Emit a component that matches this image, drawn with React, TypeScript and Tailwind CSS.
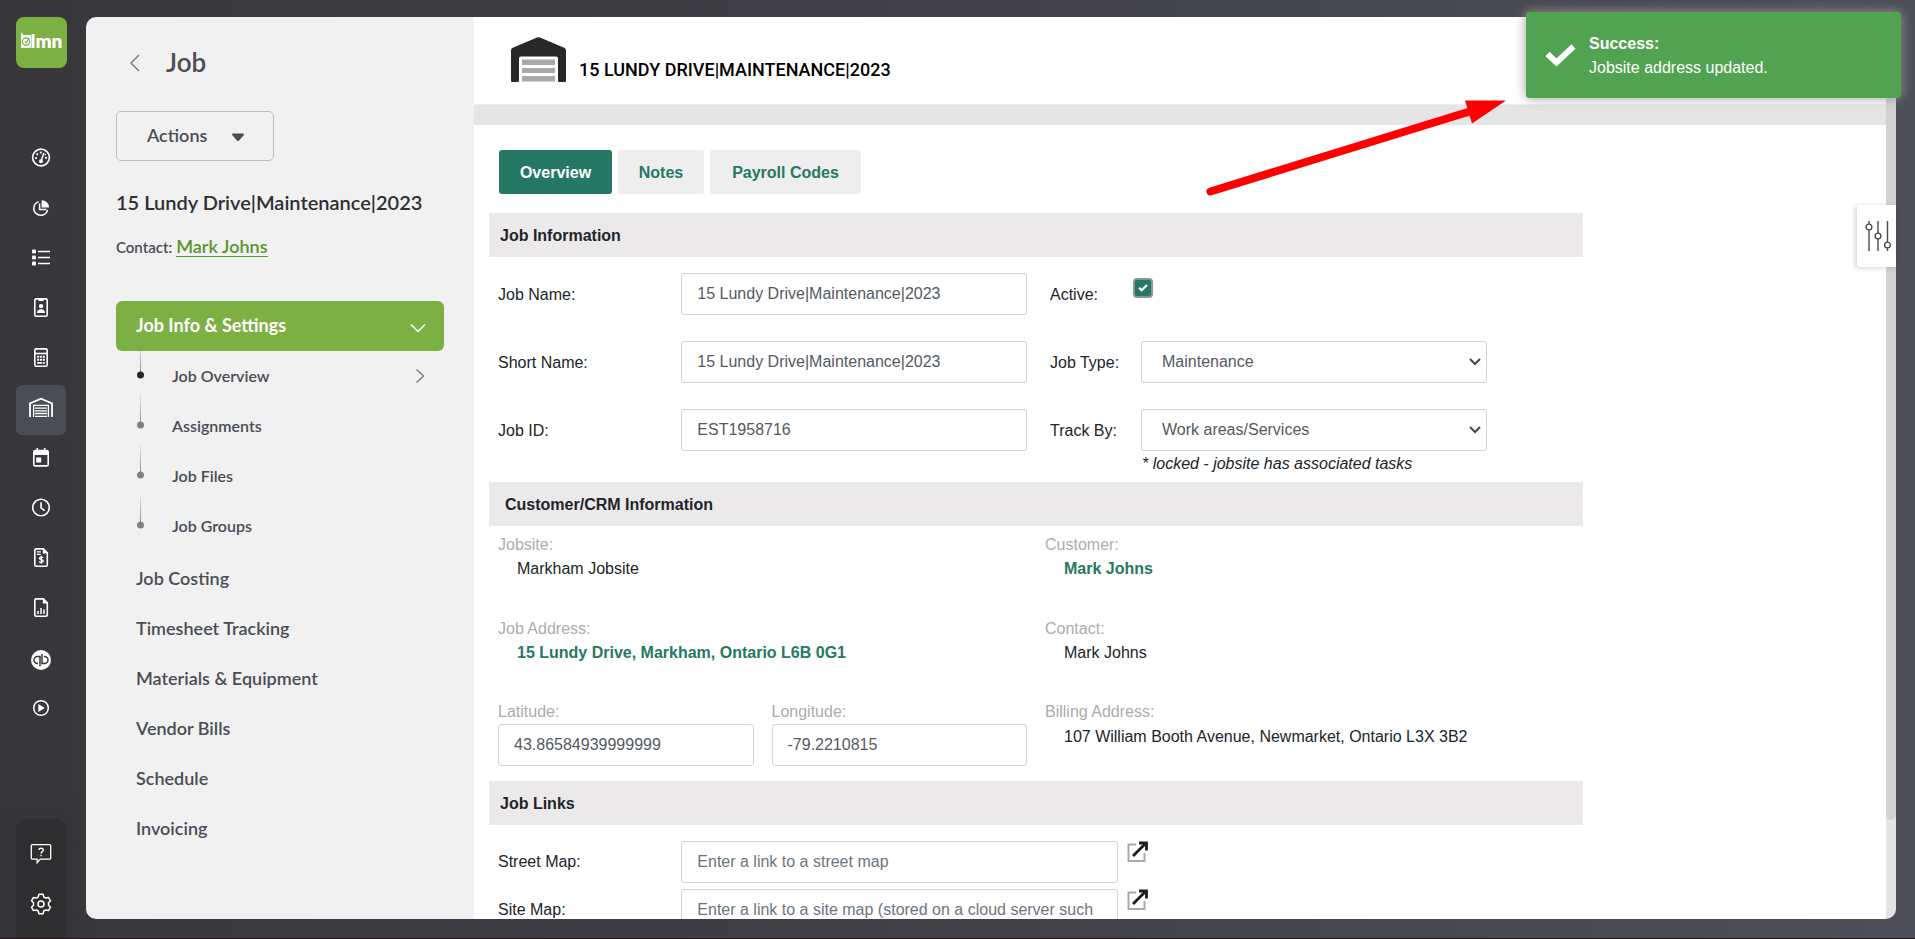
import React from "react";

type IconProps = { children: React.ReactNode; w?: number; h?: number };

function Glyph({ children, w = 24, h = 24 }: IconProps) {
  return (
    <svg width={w} height={h} viewBox={`0 0 ${w} ${h}`} fill="none" stroke="currentColor" strokeWidth={1.6} aria-hidden="true">
      {children}
    </svg>
  );
}

const railItems: { name: string; icon: React.ReactNode; active?: boolean }[] = [
  {
    name: "Dashboard",
    icon: (
      <Glyph>
        <circle cx="12" cy="11.500" r="8.400" />
        <path d="M12.200 15 14.800 7" strokeWidth="1.500" />
        <circle cx="12" cy="15.200" r="2" fill="currentColor" stroke="none" />
        <g fill="currentColor" stroke="none">
          <circle cx="7" cy="12" r="1.100" />
          <circle cx="8.300" cy="8.300" r="1.100" />
          <circle cx="11.800" cy="6.600" r="1.100" />
          <circle cx="17" cy="11.800" r="1.100" />
          <circle cx="16.300" cy="8.600" r=".8" />
        </g>
      </Glyph>
    ),
  },
  {
    name: "Reports",
    icon: (
      <Glyph>
        <path d="M9.600 5.600a7 7 0 1 0 9 8.200" strokeWidth="1.500" />
        <path d="M10.600 7.500v5.900h6.800" strokeWidth="1.500" />
        <path d="M12.600 4.200v7.400H20a7.400 7.400 0 0 0-7.400-7.400z" fill="currentColor" stroke="none" />
      </Glyph>
    ),
  },
  {
    name: "Lists",
    icon: (
      <Glyph>
        <g fill="currentColor" stroke="none">
          <rect x="3" y="3.500" width="4" height="4" rx="1.200" />
          <rect x="3" y="9.500" width="4" height="4" rx="1.200" />
          <rect x="3" y="15.500" width="4" height="4" rx="1.200" />
        </g>
        <path d="M9 5.500h12M9 11.500h12M9 17.500h12" strokeWidth="1.500" />
      </Glyph>
    ),
  },
  {
    name: "Contacts",
    icon: (
      <Glyph>
        <rect x="5.800" y="2.900" width="12.400" height="17.400" rx="1.500" />
        <path d="M9.500 3.500h5" strokeWidth="3" />
        <circle cx="12" cy="10.100" r="2.200" fill="currentColor" stroke="none" />
        <path d="M8 17.100c0-2.600 1.600-3.800 4-3.800s4 1.200 4 3.800z" fill="currentColor" stroke="none" />
      </Glyph>
    ),
  },
  {
    name: "Estimates",
    icon: (
      <Glyph>
        <rect x="5.800" y="2.900" width="12.400" height="17.400" rx="1.500" />
        <path d="M6 7.500h12" />
        <path d="M8.200 10.700h2M11 10.700h2M13.800 10.700h2M8.200 13.700h2M11 13.700h2M13.800 13.700h2M8.200 16.900h4.800M13.800 16.900h2" strokeWidth="1.900" />
      </Glyph>
    ),
  },
  {
    name: "Jobs",
    active: true,
    icon: (
      <Glyph w={26} h={24}>
        <path d="M2 21V7.300L13 2.700l11 4.600V21" strokeWidth="1.800" />
        <path d="M5.600 21V9.300h14.800V21" strokeWidth="1.300" />
        <path d="M7 12.100h12M7 14.800h12M7 17.500h12M7 20.300h12" strokeWidth="1.300" />
      </Glyph>
    ),
  },
  {
    name: "Calendar",
    icon: (
      <Glyph>
        <rect x="4.800" y="4.500" width="14.400" height="15.400" rx="1.500" />
        <path d="M5 7h14" strokeWidth="4" />
        <path d="M8.300 2v3M15.700 2v3" />
        <rect x="7.200" y="11.500" width="5" height="5" fill="currentColor" stroke="none" />
      </Glyph>
    ),
  },
  {
    name: "Time",
    icon: (
      <Glyph>
        <circle cx="12" cy="11.500" r="8.300" />
        <path d="M12 6.300v5.600l3.600 2.800" />
      </Glyph>
    ),
  },
  {
    name: "Invoices",
    icon: (
      <Glyph>
        <path d="M7.300 2.900h7l4 4v11.900a1.500 1.500 0 0 1-1.500 1.500H7.300a1.500 1.500 0 0 1-1.500-1.500V4.400a1.500 1.500 0 0 1 1.500-1.500z" />
        <path d="M13.800 2.500v5h5z" fill="currentColor" stroke="none" />
        <path d="M7.800 5.800h4M7.800 8.300h4" strokeWidth="1.200" />
        <path d="M14.200 11.800c-.5-.9-3.800-1.100-3.800.6 0 1.600 3.900.9 3.900 2.700 0 1.800-3.500 1.600-4.200.4M12.300 9.800v8" strokeWidth="1.300" />
      </Glyph>
    ),
  },
  {
    name: "Analytics",
    icon: (
      <Glyph>
        <path d="M7.300 2.900h7l4 4v11.900a1.500 1.500 0 0 1-1.500 1.500H7.300a1.500 1.500 0 0 1-1.500-1.500V4.400a1.500 1.500 0 0 1 1.500-1.500z" />
        <path d="M13.800 2.500v5h5z" fill="currentColor" stroke="none" />
        <path d="M9 18v-3M12 18v-6M15 18v-4.500" strokeWidth="1.500" />
      </Glyph>
    ),
  },
  {
    name: "QuickBooks",
    icon: (
      <Glyph>
        <circle cx="12" cy="14" r="10" fill="#fff" stroke="none" />
        <g stroke="#37363b" strokeWidth="1.500">
          <path d="M11 20.300V10.500H8.500a3.500 3.500 0 0 0 0 7H9" />
          <path d="M13 7.700v9.800h2.500a3.500 3.500 0 0 0 0-7H15" />
        </g>
      </Glyph>
    ),
  },
  {
    name: "Videos",
    icon: (
      <Glyph>
        <circle cx="12" cy="12" r="7.300" strokeWidth="1.500" />
        <path d="M9.300 8v8l6.500-4z" fill="currentColor" stroke="none" />
      </Glyph>
    ),
  },
];

function Logo() {
  return (
    <a href="#home" aria-label="lmn" className="flex h-[51px] w-[51px] items-center justify-center rounded-lg bg-[#7cb043] pb-1 text-white">
      <svg width="10" height="17" viewBox="0 0 10 17" aria-hidden="true">
        <path d="M0 .8 1.800 1.500V3H8.500A1.500 1.500 0 0 1 10 4.500v10A1.500 1.500 0 0 1 8.500 16H0z" fill="#fff" />
        <circle cx="5" cy="9.500" r="3.600" fill="none" stroke="#7cb043" strokeWidth="1.300" />
        <path d="M3.800 9.800 5 10.800 8.200 6" fill="none" stroke="#7cb043" strokeWidth="1.200" />
      </svg>
      <span className="font-['Lato',sans-serif] text-[19px] leading-5 font-extrabold">lmn</span>
    </a>
  );
}

function Rail() {
  return (
    <nav aria-label="Main" className="flex w-[86px] shrink-0 flex-col pl-4 pt-[17px] text-white">
      <Logo />
      <ul className="mt-[67px]">
        {railItems.map((item) => (
          <li key={item.name}>
            <a
              href="#section"
              aria-label={item.name}
              className={
                item.active
                  ? "flex h-[50px] w-[50px] items-center justify-center rounded-md bg-[#4a4d55] pb-1"
                  : "flex h-[50px] w-[50px] items-center justify-center pb-1"
              }
            >
              {item.icon}
            </a>
          </li>
        ))}
      </ul>
      <div className="mt-auto flex h-[119px] w-[50px] flex-col items-center gap-[26px] rounded-t-[10px] bg-[#2e2e30] pt-[23px] shadow-[0_0_24px_rgba(46,46,46,0.6)]">
        <button type="button" aria-label="Help">
          <Glyph>
            <path d="M3.500 2.700h17a1.200 1.200 0 0 1 1.200 1.200v12a1.200 1.200 0 0 1-1.200 1.200h-9.300l-3 3.600v-3.600H3.500a1.200 1.200 0 0 1-1.200-1.200v-12a1.200 1.200 0 0 1 1.200-1.200z" strokeWidth="1.300" />
            <path d="M9.900 7.800c.3-2.200 4.500-2.100 4.400.2 0 1.600-2.200 1.600-2.200 3.400M12.100 12.700v1.600" strokeWidth="1.400" />
          </Glyph>
        </button>
        <button type="button" aria-label="Settings">
          <Glyph>
            <path
              d="M10 2.300h4l.8 2.700 1.900 1.100 2.800-.7 2 3.400-2 2v2.400l2 2-2 3.400-2.800-.7-1.900 1.100-.8 2.700h-4l-.8-2.700-1.900-1.100-2.800.7-2-3.400 2-2v-2.400l-2-2 2-3.400 2.800.7L9.200 5z"
              strokeLinejoin="round"
              strokeWidth="1.500"
            />
            <circle cx="12" cy="12" r="3" />
          </Glyph>
        </button>
      </div>
    </nav>
  );
}

const subItems = ["Job Overview", "Assignments", "Job Files", "Job Groups"];
const menuItems = ["Job Costing", "Timesheet Tracking", "Materials & Equipment", "Vendor Bills", "Schedule", "Invoicing"];

function Sidebar() {
  return (
    <aside className="w-[388px] shrink-0 bg-[#f1f1f1] pl-[30px] pr-[30px] font-['Lato',sans-serif] font-semibold text-[#4a4d55]">
      <div className="flex h-[92px] items-center gap-6 pl-3">
        <button type="button" aria-label="Back">
          <svg width="14" height="18" viewBox="0 0 14 18" fill="none" stroke="#77787c" strokeWidth="1.400" aria-hidden="true">
            <path d="M11 1 3 9l8 8" />
          </svg>
        </button>
        <h1 className="pb-0.5 text-[26px] leading-8">Job</h1>
      </div>
      <button type="button" className="mt-0.5 flex h-[50px] w-[158px] items-center justify-between rounded-[5px] border border-[#bcbdbf] pl-[30px] pr-7">
        <span className="pb-0.5 text-[18px] leading-6">Actions</span>
        <svg width="14" height="9" viewBox="0 0 14 9" className="mt-0.5" aria-hidden="true">
          <path d="M2 .5h10a1 1 0 0 1 .8 1.600l-4.300 5a2 2 0 0 1-3 0l-4.300-5A1 1 0 0 1 2 .5z" fill="#4a4d55" />
        </svg>
      </button>
      <h2 className="mt-[27px] text-[20px] leading-7 text-[#2f2f33]">15 Lundy Drive|Maintenance|2023</h2>
      <p className="mt-[17px] flex items-baseline gap-1 text-[15px] leading-7">
        Contact:{" "}
        <a href="#contact" className="border-b border-[#5b952a] text-[18px] leading-5 text-[#5b952a]">
          Mark Johns
        </a>
      </p>
      <nav aria-label="Job" className="mt-10">
        <button type="button" className="flex h-[50px] w-full items-center justify-between rounded-md bg-[#7cb043] pl-5 pr-[18px] text-white">
          <span className="pb-0.5 text-[18px] leading-6 font-bold">Job Info &amp; Settings</span>
          <svg width="16" height="10" viewBox="0 0 16 10" fill="none" stroke="#fff" strokeWidth="1.500" className="mt-1" aria-hidden="true">
            <path d="M1 1.500 8 8.500l7-7" />
          </svg>
        </button>
        <ul>
          {subItems.map((name, i) => (
            <li key={name}>
              <a href="#sub" className="flex h-[50px] items-center justify-between pl-5 pr-[19px]">
                <span className="flex items-center">
                  <svg width="9" height="50" viewBox="0 0 9 50" className="-mt-1 overflow-visible" aria-hidden="true">
                    <defs>
                      <linearGradient id={`rail-${i}`} x1="0" y1="0" x2="0" y2="1">
                        <stop offset="0" stopColor="#808184" stopOpacity="0" />
                        <stop offset="1" stopColor="#808184" />
                      </linearGradient>
                    </defs>
                    <rect x="4" y="-7" width="1" height="34" fill={`url(#rail-${i})`} />
                    <circle cx="4.500" cy="26" r="3.500" fill={i === 0 ? "#27272a" : "#808184"} />
                  </svg>
                  <span className="pl-[27px] text-[16px] leading-6">{name}</span>
                </span>
                {i === 0 && (
                  <svg width="10" height="16" viewBox="0 0 10 16" fill="none" stroke="#808184" strokeWidth="1.500" aria-hidden="true">
                    <path d="m1.500 1.500 7 6.500-7 6.500" />
                  </svg>
                )}
              </a>
            </li>
          ))}
        </ul>
        <ul className="mt-0.5">
          {menuItems.map((name) => (
            <li key={name}>
              <a href="#menu" className="flex h-[50px] items-center pl-5 text-[18px] leading-6">
                {name}
              </a>
            </li>
          ))}
        </ul>
      </nav>
    </aside>
  );
}

const inputClass =
  "block h-[42px] w-full rounded-[3px] border border-[#ced4da] bg-white px-[15px] text-[#54595f] placeholder:text-[#6c757d]";

function SectionBar({ title, inset }: { title: string; inset?: boolean }) {
  return (
    <h3 className={inset ? "h-11 bg-[#ece9eb] pl-4 leading-[46px] font-bold" : "h-11 bg-[#ece9eb] pl-[11px] leading-[46px] font-bold"}>
      {title}
    </h3>
  );
}

function TextRow({ id, label, value }: { id: string; label: string; value: string }) {
  return (
    <div className="grid h-[42px] grid-cols-[1fr_2fr]">
      <label htmlFor={id} className="pl-[9px] leading-[44px]">
        {label}
      </label>
      <div className="h-[42px] pl-2.5 pr-[9px]">
        <input id={id} defaultValue={value} className={inputClass} />
      </div>
    </div>
  );
}

function SelectRow({ id, label, value }: { id: string; label: string; value: string }) {
  return (
    <div className="flex h-[42px] items-start pl-[14px]">
      <label htmlFor={id} className="w-[91px] shrink-0 leading-[44px]">
        {label}
      </label>
      <div className="grid w-[346px] items-center">
        <select
          id={id}
          defaultValue={value}
          className="col-start-1 row-start-1 h-[42px] w-full appearance-none rounded-[3px] border border-[#ced4da] bg-white px-5 text-[#54595f]"
        >
          <option>{value}</option>
        </select>
        <svg width="12" height="8" viewBox="0 0 12 8" fill="none" stroke="#43474c" strokeWidth="2" className="pointer-events-none col-start-1 row-start-1 mr-1.5 justify-self-end" aria-hidden="true">
          <path d="m1 1 5 5 5-5" />
        </svg>
      </div>
    </div>
  );
}

function Fact({ label, children }: { label: string; children: React.ReactNode }) {
  return (
    <div className="h-[84px] px-[9px] pt-px">
      <div className="text-[#acacac]">{label}</div>
      <div className="pl-[19px]">{children}</div>
    </div>
  );
}

function CoordField({ id, label, value }: { id: string; label: string; value: string }) {
  return (
    <div className="px-[9px]">
      <label htmlFor={id} className="block text-[#acacac]">
        {label}
      </label>
      <input id={id} defaultValue={value} className={inputClass} />
    </div>
  );
}

function LinkRow({ id, label, hint }: { id: string; label: string; hint: string }) {
  return (
    <div className="grid h-[42px] grid-cols-[2fr_5fr_5fr]">
      <label htmlFor={id} className="pl-[9px] leading-[42px]">
        {label}
      </label>
      <div className="pl-2.5 pr-[9px]">
        <input id={id} placeholder={hint} className={inputClass} />
      </div>
      <a href="#open" aria-label={`Open ${label}`} className="h-[22px] w-[22px]">
        <svg width="22" height="22" viewBox="0 0 22 22" fill="none" aria-hidden="true">
          <path d="M9 3.500H1.500V20H17.500V12" stroke="#a9a9a9" strokeWidth="2" />
          <path d="M6 15 18.500 2.500" stroke="#1d1d1f" strokeWidth="2.800" />
          <path d="M12 2h7.500v7.500" stroke="#1d1d1f" strokeWidth="2.800" />
        </svg>
      </a>
    </div>
  );
}

function Content() {
  return (
    <div className="flex min-w-0 flex-1 flex-col overflow-hidden bg-white">
      <header className="flex h-[88px] shrink-0 items-start border-b border-[#efefef] pl-[37px] pt-5">
        <svg width="55" height="45" viewBox="0 0 55 45" aria-hidden="true">
          <path d="M0 44V13.500a3 3 0 0 1 1.800-2.700L26 .6a4 4 0 0 1 3 0l24.200 10.200A3 3 0 0 1 55 13.500V44a1 1 0 0 1-1 1h-6a1 1 0 0 1-1-1V21.500a2 2 0 0 0-2-2H10a2 2 0 0 0-2 2V44a1 1 0 0 1-1 1H1a1 1 0 0 1-1-1z" fill="#28282b" />
          <path d="M11 22.500h33v5.500H11zM11 31h33v5H11zM11 39h33v5.500H11z" fill="#a9a9a9" />
        </svg>
        <h2 className="mt-[19px] pl-[13px] font-['Roboto',sans-serif] text-[18px] leading-7 font-medium text-black">15 LUNDY DRIVE|MAINTENANCE|2023</h2>
      </header>
      <div className="h-5 shrink-0 bg-[#e5e5e5]" />
      <div className="pl-[15px]">
        <div role="tablist" className="flex gap-1.5 pb-[19px] pl-2.5 pt-[25px] font-bold">
          <button type="button" role="tab" aria-selected="true" className="h-11 w-[113px] rounded-[3px] bg-[#257863] pt-0.5 text-white">
            Overview
          </button>
          <button type="button" role="tab" aria-selected="false" className="h-11 w-[86px] rounded-[3px] bg-[#eeeeee] pt-0.5 text-[#257863]">
            Notes
          </button>
          <button type="button" role="tab" aria-selected="false" className="h-11 w-[151px] rounded-[3px] bg-[#eeeeee] pt-0.5 text-[#257863]">
            Payroll Codes
          </button>
        </div>
        <form className="max-w-[1094px]">
          <SectionBar title="Job Information" />
          <div className="grid grid-cols-2 gap-y-[26px] pt-4">
            <TextRow id="job-name" label="Job Name:" value="15 Lundy Drive|Maintenance|2023" />
            <div className="flex h-[42px] pl-[14px]">
              <label htmlFor="active" className="w-[83px] leading-[44px]">
                Active:
              </label>
              <div className="mt-[5px] grid h-5 w-5 place-items-center">
                <input
                  id="active"
                  type="checkbox"
                  defaultChecked
                  className="col-start-1 row-start-1 h-5 w-5 appearance-none rounded-[4px] border-2 border-[#8f9391] bg-[#257863]"
                />
                <svg width="10" height="8" viewBox="0 0 10 8" fill="none" stroke="#fff" strokeWidth="2.200" className="pointer-events-none col-start-1 row-start-1" aria-hidden="true">
                  <path d="M1 3.800 3.700 6.300 9 1" />
                </svg>
              </div>
            </div>
            <TextRow id="short-name" label="Short Name:" value="15 Lundy Drive|Maintenance|2023" />
            <SelectRow id="job-type" label="Job Type:" value="Maintenance" />
            <TextRow id="job-id" label="Job ID:" value="EST1958716" />
            <SelectRow id="track-by" label="Track By:" value="Work areas/Services" />
          </div>
          <p className="ml-[50%] pb-1.5 pl-[106px] pt-px italic">* locked - jobsite has associated tasks</p>
          <SectionBar title="Customer/CRM Information" inset />
          <div className="grid grid-cols-2 pb-[15px] pt-1.5">
            <Fact label="Jobsite:">Markham Jobsite</Fact>
            <Fact label="Customer:">
              <a href="#customer" className="font-bold text-[#257863]">
                Mark Johns
              </a>
            </Fact>
            <Fact label="Job Address:">
              <a href="#address" className="font-bold text-[#257863]">
                15 Lundy Drive, Markham, Ontario L6B 0G1
              </a>
            </Fact>
            <Fact label="Contact:">Mark Johns</Fact>
            <div className="grid grid-cols-2">
              <CoordField id="latitude" label="Latitude:" value="43.86584939999999" />
              <CoordField id="longitude" label="Longitude:" value="-79.2210815" />
            </div>
            <div className="px-[9px]">
              <div className="text-[#acacac]">Billing Address:</div>
              <div className="pl-[19px] pt-px">107 William Booth Avenue, Newmarket, Ontario L3X 3B2</div>
            </div>
          </div>
          <SectionBar title="Job Links" />
          <div className="flex flex-col gap-1.5 pt-4">
            <LinkRow id="street-map" label="Street Map:" hint="Enter a link to a street map" />
            <LinkRow id="site-map" label="Site Map:" hint="Enter a link to a site map (stored on a cloud server such" />
          </div>
        </form>
      </div>
    </div>
  );
}

export default function App() {
  return (
    <div className="relative flex h-screen overflow-hidden border-b border-[#1d1517] bg-linear-to-r from-[#37363b] via-[#414147] to-[#4e4e58] font-['Liberation_Sans',Arial,sans-serif] text-[16px] leading-6 text-[#212529]">
      <Rail />
      <main className="mb-[19px] mr-[19px] mt-[17px] flex min-w-0 flex-1 overflow-hidden rounded-[10px]">
        <Sidebar />
        <Content />
        <div className="w-2.5 shrink-0 bg-[#e4e4e4]">
          <div className="h-[89%] rounded-b-full bg-[#d2d2d2]" />
        </div>
      </main>
      <button
        type="button"
        aria-label="Filters"
        className="absolute right-[19px] top-[205px] flex h-[62px] w-[39px] items-center justify-center rounded-l-[3px] bg-white pl-0.5 shadow-[-2px_1px_5px_rgba(0,0,0,0.18)]"
      >
        <svg width="26" height="30" viewBox="0 0 26 30" fill="none" stroke="#4b4b4e" strokeWidth="1.400" aria-hidden="true">
          <path d="M4 0v3M4 9v21M13 0v12M13 18v12M22.500 0v21M22.500 27v3" />
          <circle cx="4" cy="6" r="2.900" />
          <circle cx="13" cy="15" r="2.900" />
          <circle cx="22.500" cy="24" r="2.900" />
        </svg>
      </button>
      <svg width="300" height="98" viewBox="0 0 300 98" className="absolute right-[409px] top-[99px]" aria-hidden="true">
        <path d="M4.500 92.500 262 13" stroke="#fe0000" strokeWidth="8" strokeLinecap="round" />
        <path d="M259 1.500h41l-34 23z" fill="#fe0000" />
      </svg>
      <div role="status" className="absolute right-[14px] top-3 flex h-[86px] w-[375px] items-center rounded-[3px] bg-[#51a351] pl-[19px] text-white shadow-[0_0_12px_#999999]">
        <svg width="31" height="23" viewBox="0 0 31 23" fill="none" stroke="#fff" strokeWidth="6" aria-hidden="true">
          <path d="M2.500 10 11.500 18.500 28.500 2.500" />
        </svg>
        <div className="pl-[13px] pt-0.5">
          <div className="font-bold">Success:</div>
          <div>Jobsite address updated.</div>
        </div>
      </div>
    </div>
  );
}
